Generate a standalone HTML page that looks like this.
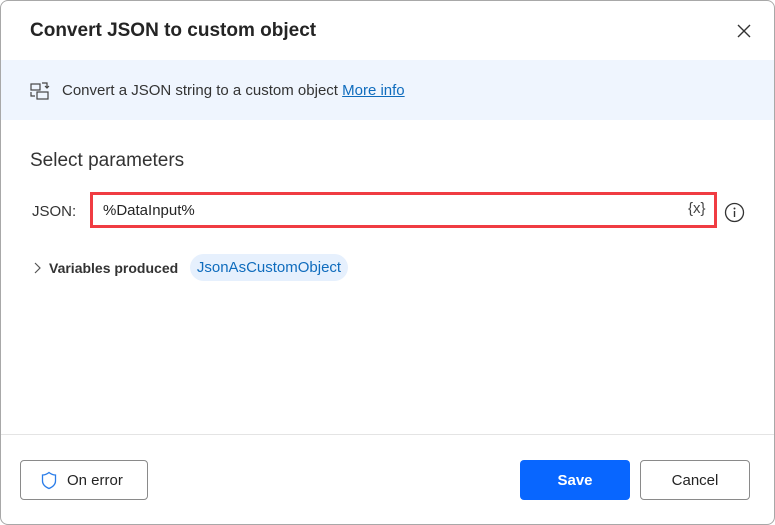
<!DOCTYPE html>
<html><head><style>
*{box-sizing:border-box;margin:0;padding:0}
body{width:775px;height:525px;background:#fff;font-family:"Segoe UI","Liberation Sans",sans-serif;color:#242424;position:relative;overflow:hidden}
.frame{position:absolute;left:0;top:0;width:775px;height:525px;border:1px solid #a8a8a8;border-radius:8px}
.abs{position:absolute}
</style></head><body>
<div class="frame"></div>
<div class="abs" style="left:30px;top:20px;font-size:19px;font-weight:bold;color:#242424">Convert JSON to custom object</div>
<svg class="abs" style="left:737px;top:24px" width="14" height="14"><path d="M1 1L13 13M13 1L1 13" stroke="#333" stroke-width="1.4"/></svg>
<div class="abs" style="left:1px;top:60px;width:773px;height:60px;background:#eff5fe"></div>
<svg class="abs" style="left:30px;top:81px" width="20" height="20" fill="none" stroke="#444" stroke-width="1.2"><rect x="1" y="3" width="9" height="6"/><rect x="7" y="11" width="11" height="7"/><path d="M12 2h5v5M15 5l2 2 2-2M1 11v4h4"/></svg>
<div class="abs" style="left:62px;top:82px;font-size:15px;color:#333">Convert a JSON string to a custom object <span style="color:#0f6cbd;text-decoration:underline">More info</span></div>
<div class="abs" style="left:30px;top:150px;font-size:19px;color:#333">Select parameters</div>
<div class="abs" style="left:32px;top:203px;font-size:15px;color:#333">JSON:</div>
<div class="abs" style="left:90px;top:192px;width:627px;height:36px;border:3px solid #f03c42"></div>
<div class="abs" style="left:103px;top:202px;font-size:15px;color:#242424">%DataInput%</div>
<div class="abs" style="left:688px;top:200px;font-size:15px;color:#444">{x}</div>
<svg class="abs" style="left:724px;top:202px" width="21" height="21"><circle cx="10.5" cy="10.5" r="9" fill="none" stroke="#333" stroke-width="1.3"/><path d="M10.5 9v6" stroke="#333" stroke-width="1.4"/><circle cx="10.5" cy="6.5" r="1" fill="#333"/></svg>
<svg class="abs" style="left:33px;top:262px" width="8" height="12"><path d="M2 1l5 5-5 5" fill="none" stroke="#555" stroke-width="1.2"/></svg>
<div class="abs" style="left:49px;top:260px;font-size:14px;font-weight:bold;color:#333">Variables produced</div>
<div class="abs" style="left:190px;top:254px;width:158px;height:27px;border-radius:14px;background:#e6f0fd;color:#0f6cbd;font-size:15px;line-height:28px;text-align:center">JsonAsCustomObject</div>
<div class="abs" style="left:1px;top:434px;width:773px;height:1px;background:#e4e4e4"></div>
<div class="abs" style="left:20px;top:460px;width:128px;height:40px;border:1px solid #8a8a8a;border-radius:4px"></div>
<svg class="abs" style="left:40px;top:471px" width="18" height="19"><path d="M9 1.5C6.5 3.5 4.5 4 2.5 4v6c0 4 3 6 6.5 7.5 3.5-1.5 6.5-3.5 6.5-7.5V4c-2 0-4-.5-6.5-2.5z" fill="none" stroke="#2b7de9" stroke-width="1.3"/></svg>
<div class="abs" style="left:67px;top:472px;font-size:15px;color:#242424">On error</div>
<div class="abs" style="left:520px;top:460px;width:110px;height:40px;background:#0866ff;border-radius:4px;color:#fff;font-size:15px;font-weight:bold;line-height:42px;text-align:center">Save</div>
<div class="abs" style="left:640px;top:460px;width:110px;height:40px;border:1px solid #8a8a8a;border-radius:4px;font-size:15px;line-height:40px;text-align:center;color:#242424">Cancel</div>
</body></html>
